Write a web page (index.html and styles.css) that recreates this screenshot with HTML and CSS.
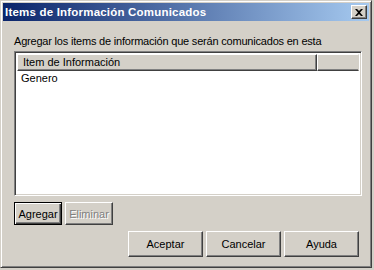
FILE: index.html
```html
<!DOCTYPE html>
<html lang="es">
<head>
    <meta charset="UTF-8">
    <title>Items de Información Comunicados</title>
    <link rel="stylesheet" href="styles.css">
</head>
<body>
    <div class="window">
        <div class="titlebar">
            <span class="title">Items de Información Comunicados</span>
            <button class="close-btn">
                <svg width="8" height="7" viewBox="0 0 8 7">
                    <path d="M0 0h2l2 2 2-2h2L5 3.5 8 7H6L4 5 2 7H0l3-3.5z" fill="#000"/>
                </svg>
            </button>
        </div>

        <div class="content">
            <p class="label">Agregar los items de información que serán comunicados en esta</p>

            <div class="listview">
                <div class="list-header">
                    <div class="col col-main">Item de Información</div>
                    <div class="col col-fill"></div>
                </div>
                <div class="list-body">
                    <div class="row">Genero</div>
                </div>
            </div>

            <div class="list-actions">
                <button class="btn btn-small btn-default">Agregar</button>
                <button class="btn btn-small" disabled>Eliminar</button>
            </div>

            <div class="dialog-actions">
                <button class="btn btn-wide">Aceptar</button>
                <button class="btn btn-wide">Cancelar</button>
                <button class="btn btn-wide">Ayuda</button>
            </div>
        </div>
    </div>
</body>
</html>
```

FILE: styles.css
```css
body {
    margin: 0;
    background: #d4d0c8;
    font-family: "Liberation Sans", Arial, sans-serif;
    font-size: 11px;
}

.window {
    box-sizing: border-box;
    width: 372px;
    height: 268px;
    background: #d4d0c8;
    border: 1px solid;
    border-color: #d4d0c8 #404040 #404040 #d4d0c8;
    box-shadow: inset 1px 1px #fff, inset -1px -1px #808080;
    padding: 2px;
}

.titlebar {
    height: 18px;
    display: flex;
    align-items: center;
    justify-content: space-between;
    padding: 0 2px;
    background: linear-gradient(to right, #0a246a, #a6caf0);
}

.title {
    color: #fff;
    font-weight: bold;
    font-size: 11.5px;
    letter-spacing: 0.2px;
}

.close-btn {
    box-sizing: border-box;
    width: 16px;
    height: 14px;
    padding: 0;
    display: flex;
    align-items: center;
    justify-content: center;
    background: #d4d0c8;
    border: 1px solid;
    border-color: #fff #404040 #404040 #fff;
    box-shadow: inset -1px -1px #808080;
}

.content {
    padding: 0 0 0 11px;
}

.label {
    margin: 14px 0 0 0;
    line-height: 13px;
    letter-spacing: -0.2px;
    color: #000;
}

.listview {
    box-sizing: border-box;
    margin-top: 3px;
    width: 348px;
    height: 145px;
    background: #fff;
    border: 1px solid;
    border-color: #808080 #fff #fff #808080;
    box-shadow: inset 1px 1px #404040, inset -1px -1px #d4d0c8;
    padding: 2px;
}

.list-header {
    display: flex;
    height: 17px;
}

.col {
    box-sizing: border-box;
    height: 17px;
    background: #d4d0c8;
    border: 1px solid;
    border-color: #fff #404040 #404040 #fff;
    box-shadow: inset -1px -1px #808080;
    padding: 1px 5px;
    line-height: 13px;
}

.col-main {
    width: 300px;
}

.col-fill {
    flex: 1;
    border-right-color: #d4d0c8;
    box-shadow: inset 0 -1px #808080;
}

.list-body {
    padding-top: 1px;
}

.row {
    padding: 0 4px;
    line-height: 13px;
}

.list-actions {
    display: flex;
    gap: 3px;
    margin-top: 6px;
}

.dialog-actions {
    display: flex;
    gap: 3px;
    margin: 6px 0 0 114px;
}

.btn {
    box-sizing: border-box;
    background: #d4d0c8;
    color: #000;
    font-family: "Liberation Sans", Arial, sans-serif;
    font-size: 11px;
    padding: 0;
    border: 1px solid;
    border-color: #fff #404040 #404040 #fff;
    box-shadow: inset -1px -1px #808080;
}

.btn-small {
    width: 48px;
    height: 23px;
}

.btn-default {
    border: 1px solid #000;
    box-shadow: inset 1px 1px #fff, inset -1px -1px #404040, inset -2px -2px #808080;
}

.btn:disabled {
    color: #808080;
    text-shadow: 1px 1px #fff;
}

.btn-wide {
    width: 75px;
    height: 26px;
}
```
